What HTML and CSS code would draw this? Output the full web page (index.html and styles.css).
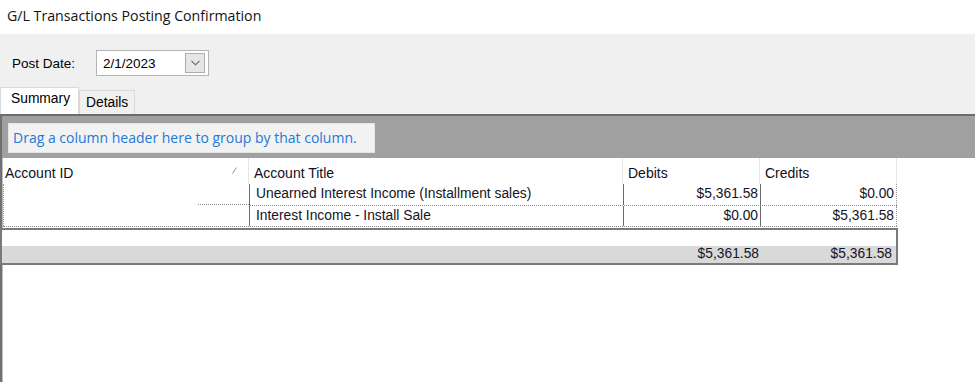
FILE: index.html
```html
<!DOCTYPE html>
<html lang="en">
  <head>
    <meta charset="UTF-8" />
    <title>G/L Transactions Posting Confirmation</title>
    <link rel="stylesheet" href="styles.css">
  </head>
  <body>
    <div class="titlebar">G/L Transactions Posting Confirmation</div>

    <div class="content">
      <div class="date-row">
        <label class="date-label">Post Date:</label>
        <div class="datebox">
          <span class="date-value">2/1/2023</span>
          <span class="drop-btn">
            <svg width="9" height="6" viewBox="0 0 9 6">
              <polyline points="0.5,0.8 4.5,4.8 8.5,0.8" fill="none" stroke="#606060" stroke-width="1.1" />
            </svg>
          </span>
        </div>
      </div>

      <!-- Tabs -->
      <div class="tabs">
        <div class="tab tab-active">Summary</div>
        <div class="tab">Details</div>
      </div>

      <div class="grid">
        <div class="group-panel">
          <div class="group-hint">Drag a column header here to group by that column.</div>
        </div>

        <div class="grid-body">
          <div class="head-row">
            <div class="hcell col-id">
              <span>Account ID</span>
              <svg class="sort-mark" width="5" height="7" viewBox="0 0 5 7">
                <line x1="0.5" y1="6.5" x2="4.5" y2="0.5" stroke="#909090" stroke-width="1" />
              </svg>
            </div>
            <div class="hcell col-title">Account Title</div>
            <div class="hcell col-debit">Debits</div>
            <div class="hcell col-credit">Credits</div>
          </div>

          <div class="group-rows">
            <div class="id-cell">
              <div class="id-notch"></div>
            </div>
            <div class="rows">
              <div class="row">
                <div class="cell col-title">Unearned Interest Income (Installment sales)</div>
                <div class="cell col-debit num">$5,361.58</div>
                <div class="cell col-credit num">$0.00</div>
              </div>
              <div class="row">
                <div class="cell col-title">Interest Income - Install Sale</div>
                <div class="cell col-debit num">$0.00</div>
                <div class="cell col-credit num">$5,361.58</div>
              </div>
            </div>
          </div>

          <!-- Totals -->
          <div class="summary">
            <div class="sum-blank"></div>
            <div class="sum-row">
              <div class="sum-cell sum-id"></div>
              <div class="sum-cell sum-title"></div>
              <div class="sum-cell sum-debit num">$5,361.58</div>
              <div class="sum-cell sum-credit num">$5,361.58</div>
            </div>
          </div>
        </div>
      </div>
    </div>
  </body>
</html>
```

FILE: styles.css
```css
* {
  margin: 0;
  padding: 0;
  box-sizing: border-box;
}

body {
  width: 975px;
  height: 382px;
  overflow: hidden;
  background-color: #ffffff;
  font-family: "Liberation Sans", Arial, sans-serif;
  font-size: 14px;
  color: #000;
}

.titlebar {
  height: 34px;
  padding: 6px 0 0 7px;
  background-color: #ffffff;
  font-family: "Open Sans", "Noto Sans", sans-serif;
  font-size: 14.2px;
  color: #141414;
}

.content {
  height: 348px;
  display: flex;
  flex-direction: column;
  background-color: #f0f0f0;
}

.date-row {
  display: flex;
  align-items: center;
  padding: 16px 0 0 12px;
  height: 42px;
}

.date-label {
  width: 84px;
  font-size: 13.5px;
}

.datebox {
  width: 113px;
  height: 26px;
  display: flex;
  align-items: center;
  justify-content: space-between;
  padding: 0 3px 0 6px;
  background-color: #fff;
  border: 1px solid #b4b4b4;
}

.date-value {
  font-size: 13.5px;
}

.drop-btn {
  width: 20px;
  height: 20px;
  display: flex;
  align-items: center;
  justify-content: center;
  background-color: #e6e6e6;
  border: 1px solid #adadad;
}

.tabs {
  display: flex;
  align-items: flex-end;
  height: 38px;
}

.tab {
  height: 24px;
  padding: 4px 6px 0 6px;
  background-color: #f0f0f0;
  border: 1px solid #dadada;
  border-bottom: none;
  font-size: 13.8px;
}

.tab-active {
  width: 79px;
  height: 27px;
  padding: 3px 0 0 10px;
  background-color: #fff;
}

.grid {
  flex: 1;
  display: flex;
  flex-direction: column;
  background-color: #fff;
  border-top: 2px solid #6c6c6c;
  border-left: 2px solid #707070;
}

.group-panel {
  height: 42px;
  padding: 7px 0 0 6px;
  background-color: #a0a0a0;
}

.group-hint {
  width: 367px;
  height: 30px;
  padding: 4px 0 0 4px;
  background-color: #f2f2f2;
  border: 1px solid #e4e4e4;
  color: #1e78d6;
  font-family: "Open Sans", "Noto Sans", sans-serif;
  font-size: 14px;
}

.grid-body {
  flex: 1;
  border-left: 1px solid #bdbdbd;
}

.head-row {
  display: flex;
  height: 26px;
}

.hcell {
  padding: 7px 0 0 5px;
  border-right: 1px solid #e6e6e6;
  color: #101020;
}

.col-id {
  width: 246px;
  padding-left: 2px;
  display: flex;
  justify-content: space-between;
  padding-right: 11px;
}

.sort-mark {
  margin-top: 2px;
}

.col-title {
  width: 374px;
}

.col-debit {
  width: 137px;
}

.col-credit {
  width: 137px;
}

.group-rows {
  display: flex;
  border-bottom: 1px dotted #8a8a8a;
  width: 894px;
}

.id-cell {
  width: 246px;
  border-left: 1px dotted #9a9a9a;
  display: flex;
  flex-direction: column;
  align-items: flex-end;
}

.id-notch {
  width: 51px;
  height: 21px;
  border-bottom: 1px dotted #8a8a8a;
}

.rows {
  display: flex;
  flex-direction: column;
}

.row {
  display: flex;
  height: 21px;
}

.row + .row {
  border-top: 1px dotted #8a8a8a;
}

.cell {
  padding: 2px 2px 0 6px;
  border-left: 1px solid #6c6c6c;
  color: #141428;
  font-size: 13.8px;
}

.row .col-title {
  width: 374px;
}

.row .col-debit {
  width: 137px;
}

.row .col-credit {
  width: 137px;
  border-right: 1px dotted #9a9a9a;
}

.num {
  text-align: right;
}

.summary {
  width: 898px;
  margin: 1px 0 0 -3px;
  border: 2px solid #7a7a7a;
}

.sum-blank {
  height: 16px;
  background-color: #fff;
}

.sum-row {
  display: flex;
  height: 17px;
  background-color: #d9d9d9;
  color: #141428;
  font-size: 13.8px;
}

.sum-cell {
  padding-right: 2px;
}

.sum-id {
  width: 248px;
}

.sum-title {
  width: 374px;
}

.sum-debit {
  width: 137px;
}

.sum-credit {
  width: 133px;
}
```
